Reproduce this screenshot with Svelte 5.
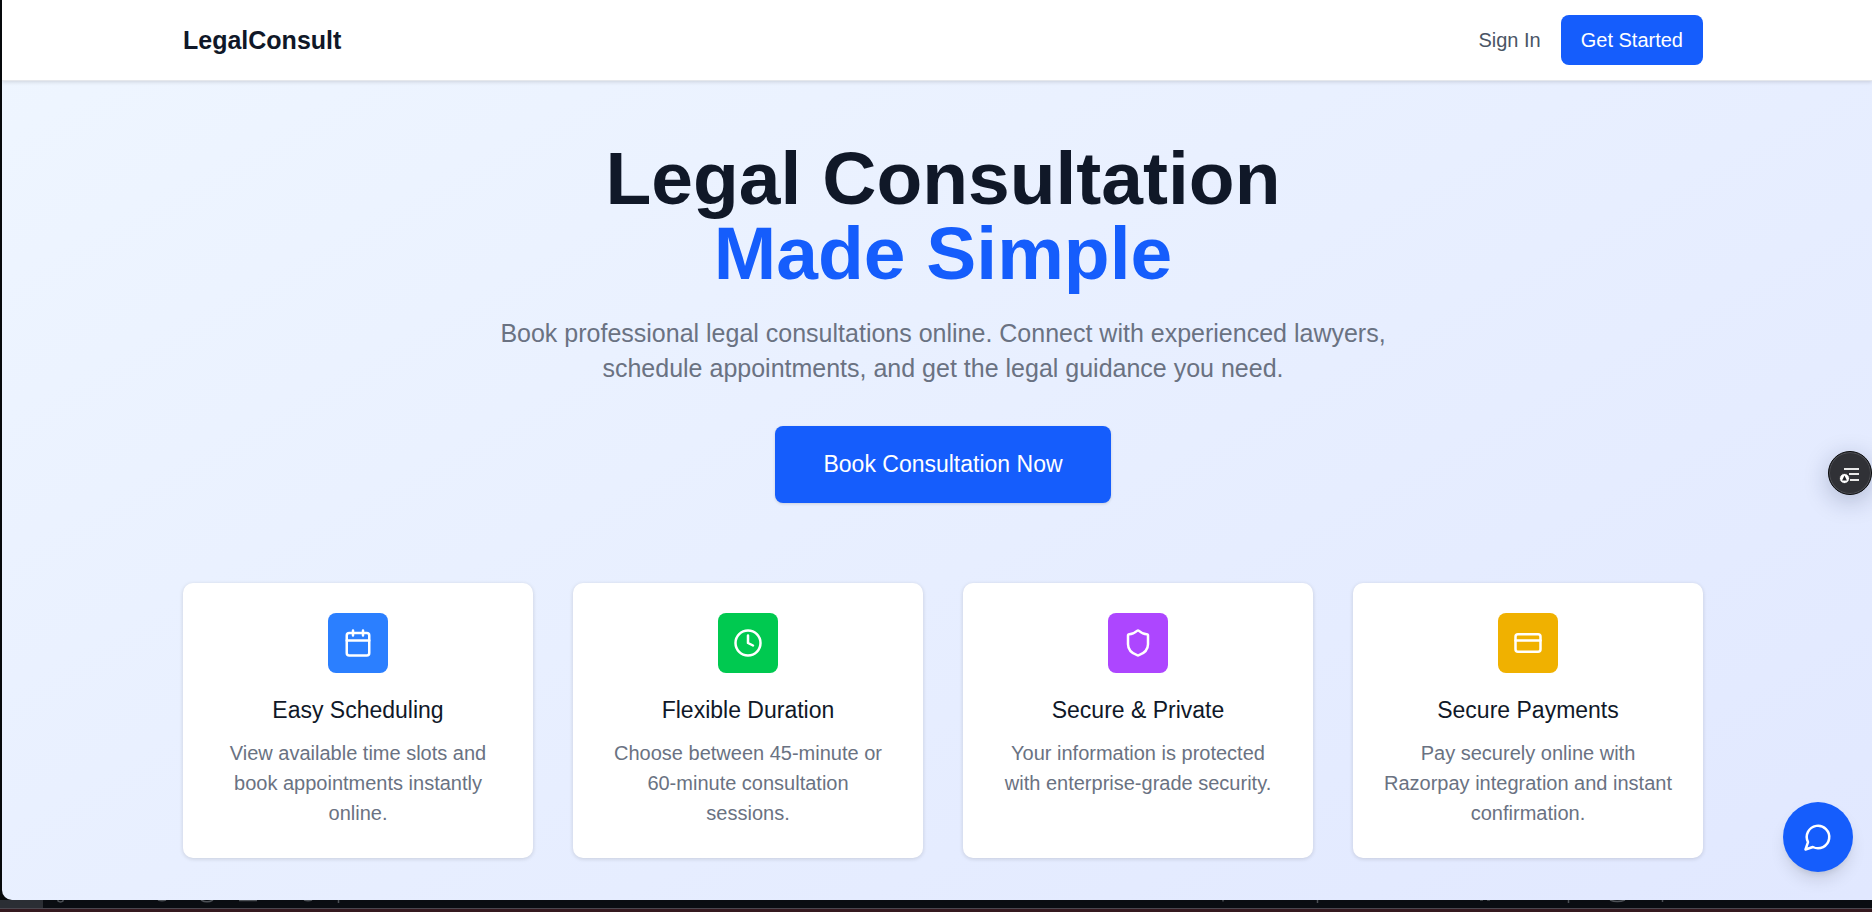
<script>
  const features = [
    {
      icon: 'calendar',
      tone: 'blue',
      title: 'Easy Scheduling',
      text: 'View available time slots and book appointments instantly online.'
    },
    {
      icon: 'clock',
      tone: 'green',
      title: 'Flexible Duration',
      text: 'Choose between 45-minute or 60-minute consultation sessions.'
    },
    {
      icon: 'shield',
      tone: 'purple',
      title: 'Secure & Private',
      text: 'Your information is protected with enterprise-grade security.'
    },
    {
      icon: 'card',
      tone: 'yellow',
      title: 'Secure Payments',
      text: 'Pay securely online with Razorpay integration and instant confirmation.'
    }
  ];
</script>

<div class="desktop">
  <div class="window">
    <header>
      <div class="container bar">
        <a class="brand" href="#home">LegalConsult</a>
        <nav>
          <a class="signin" href="#signin">Sign In</a>
          <a class="button" href="#start">Get Started</a>
        </nav>
      </div>
    </header>

    <main>
      <div class="container">
        <section class="hero">
          <h1>Legal Consultation <span>Made Simple</span></h1>
          <p>
            Book professional legal consultations online. Connect with experienced lawyers, schedule
            appointments, and get the legal guidance you need.
          </p>
          <button class="cta" type="button">Book Consultation Now</button>
        </section>

        <section class="features">
          {#each features as f}
            <article>
              <div class="tile {f.tone}">
                <svg class="icon" viewBox="0 0 24 24" aria-hidden="true">
                  {#if f.icon === 'calendar'}
                    <path d="M8 2v4M16 2v4M3 10h18" />
                    <rect x="3" y="4" width="18" height="18" rx="2" />
                  {:else if f.icon === 'clock'}
                    <circle cx="12" cy="12" r="10" />
                    <path d="M12 6v6l4 2" />
                  {:else if f.icon === 'shield'}
                    <path
                      d="M20 13c0 5-3.5 7.5-7.66 8.95a1 1 0 0 1-.67-.01C7.5 20.5 4 18 4 13V6a1 1 0 0 1 1-1c2 0 4.5-1.2 6.24-2.72a1.17 1.17 0 0 1 1.52 0C14.51 3.81 17 5 19 5a1 1 0 0 1 1 1z"
                    />
                  {:else}
                    <rect x="2" y="5" width="20" height="14" rx="2" />
                    <path d="M2 10h20" />
                  {/if}
                </svg>
              </div>
              <h2>{f.title}</h2>
              <p>{f.text}</p>
            </article>
          {/each}
        </section>
      </div>
    </main>
  </div>

  <footer class="dock" aria-hidden="true">
    <svg width="1872" height="9" viewBox="0 0 1872 9">
      <rect width="43" height="9" fill="#2b2e34" />
      <g fill="none" stroke="#4c5056" stroke-width="1.5">
        <path d="M58 0v1a3 2 0 0 0 5 0V0M158 0q4 1.500 8 0M201 0q6 3.500 12 0M304 0q4 1.500 8 0" />
        <path d="M239 .5h18M338.500 0v3M1223 0v1.500M1317.500 0v3M1568.500 0v3M1662.500 0v2" />
        <path d="M1480 0h3M1487 0h3M1610 0q7 3 15 0" />
      </g>
    </svg>
  </footer>

  <button class="reader" type="button" aria-label="Reading tools">
    <svg viewBox="0 0 44 44" aria-hidden="true">
      <path d="M15 17h15M20 22h10M21 28h9" stroke="#e8e8e8" stroke-width="2" />
      <circle cx="15.500" cy="26.500" r="5" fill="#fff" stroke="#303136" stroke-width="1" />
      <path d="M15.500 23.500l2.400 5h-4.800z" fill="#202126" />
    </svg>
  </button>

  <button class="chat" type="button" aria-label="Open chat">
    <svg class="icon" viewBox="0 0 24 24" aria-hidden="true">
      <path d="M7.900 20A9 9 0 1 0 4 16.100L2 22Z" />
    </svg>
  </button>
</div>

<style>
  :global(body) {
    margin: 0;
    background: #0a0c10;
  }

  .desktop {
    display: flex;
    flex-direction: column;
    min-height: 100vh;
    background: #07090c;
    font-family: 'Liberation Sans', Arial, sans-serif;
    font-size: 20px;
    line-height: 30px;
    overflow: hidden;
  }

  .window {
    flex: 1;
    margin-left: 2px;
    border-bottom-left-radius: 10px;
    overflow: hidden;
    background: linear-gradient(to bottom right in oklab, #eff6ff, #e0e7ff) 0 0 / 100% 115%;
  }

  header,
  main {
    padding-left: 12px;
  }

  .container {
    max-width: 1520px;
    margin: 0 auto;
  }

  header {
    background: #fff;
    border-bottom: 1px solid #e5e7eb;
    box-shadow: 0 1px 4px rgba(0, 0, 0, 0.14);
  }

  .bar {
    display: flex;
    align-items: center;
    justify-content: space-between;
    height: 80px;
  }

  a {
    text-decoration: none;
  }

  .brand {
    color: #101828;
    font-size: 25px;
    font-weight: 700;
  }

  nav {
    display: flex;
    align-items: center;
    gap: 20px;
  }

  .signin {
    color: #4a5565;
  }

  .button {
    padding: 10px 20px;
    border-radius: 8px;
    background: #155dfc;
    color: #fff;
  }

  .hero {
    display: flex;
    flex-direction: column;
    align-items: center;
    padding: 60px 0 80px;
    text-align: center;
  }

  h1 {
    margin: 0 0 25px;
    color: #101828;
    font-size: 75px;
    line-height: 75px;
    font-weight: 700;
  }

  h1 span {
    display: block;
    color: #155dfc;
  }

  .hero p {
    max-width: 960px;
    margin: 0 0 40px;
    color: #6a7282;
    font-size: 25px;
    line-height: 35px;
  }

  .cta {
    padding: 21px 48px;
    border: 0;
    border-radius: 8px;
    background: #155dfc;
    box-shadow: 0 1px 3px rgba(0, 0, 0, 0.14);
    color: #fff;
    font: inherit;
    font-size: 23px;
    line-height: 35px;
  }

  .features {
    display: grid;
    grid-template-columns: repeat(4, 1fr);
    gap: 40px;
    padding-bottom: 40px;
  }

  article {
    display: flex;
    flex-direction: column;
    align-items: center;
    padding: 30px;
    border-radius: 10px;
    background: #fff;
    box-shadow: 0 1px 4px rgba(0, 0, 0, 0.14);
    text-align: center;
  }

  .tile {
    display: grid;
    place-items: center;
    width: 60px;
    height: 60px;
    border-radius: 8px;
  }

  .blue {
    background: #2b7fff;
  }

  .green {
    background: #00c950;
  }

  .purple {
    background: #ad46ff;
  }

  .yellow {
    background: #f0b100;
  }

  .icon {
    width: 30px;
    height: 30px;
    fill: none;
    stroke: #fff;
    stroke-width: 2;
    stroke-linecap: round;
    stroke-linejoin: round;
  }

  h2 {
    margin: 20px 0 10px;
    color: #101828;
    font-size: 23px;
    line-height: 35px;
    font-weight: 400;
  }

  article p {
    margin: 0;
    color: #6a7282;
  }

  .dock {
    height: 8px;
    overflow: hidden;
    margin-bottom: 3px;
    border-bottom: 1px solid #4b474f;
    background: #0a0d12;
    box-shadow: 0 3px #35191f;
  }

  .dock svg {
    display: block;
  }

  .reader,
  .chat {
    position: fixed;
    display: grid;
    place-items: center;
    padding: 0;
    border-radius: 50%;
  }

  .reader {
    top: 451px;
    right: 0;
    width: 44px;
    height: 44px;
    border: 1px solid #08090b;
    background: #303136;
    box-shadow:
      inset 0 0 0 1px #505156,
      0 6px 24px rgba(20, 30, 70, 0.25);
  }

  .reader svg {
    width: 44px;
    height: 44px;
  }

  .chat {
    right: 19px;
    bottom: 40px;
    width: 70px;
    height: 70px;
    border: 0;
    background: #155dfc;
    box-shadow:
      0 10px 18px -4px rgba(0, 0, 0, 0.14),
      0 4px 8px -4px rgba(0, 0, 0, 0.12);
  }
</style>
